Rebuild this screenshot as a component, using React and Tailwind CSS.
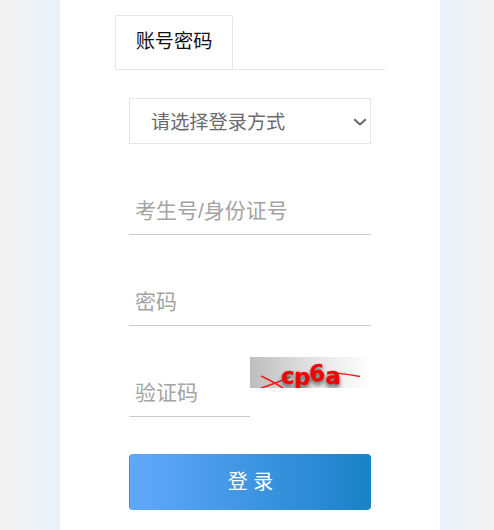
export default function App() {
  const field =
    "block w-[242px] border-b border-[#c9c9c9] bg-white pl-[6px] text-[21px] outline-none placeholder:text-[#a3a3a3]";
  return (
    <div className="flex h-[530px] w-[494px] overflow-hidden bg-[linear-gradient(90deg,#f3f3f3_15px,#e8f2fb_60px,#e8f2fb_440px,#f3f3f3_482px)] pl-[60px] font-['Liberation_Sans','Noto_Sans_CJK_SC',sans-serif]">
      <div className="h-full w-[380px] bg-white pl-[55px] pt-[15px]">
        <div className="flex h-[55px] w-[270px] border-b border-[#e6e6e6]">
          <div className="flex h-[55px] w-[118px] items-center justify-center rounded-t-[2px] border border-[#e6e6e6] bg-white text-[19.2px] text-[#111]">
            账号密码
          </div>
        </div>
        <div className="ml-[14px] w-[242px]">
          <div className="relative mt-[28px] h-[46px] w-[242px]">
            <select
              defaultValue="a"
              className="block h-[46px] w-[242px] appearance-none rounded-none border border-[#e6e6e6] bg-white pl-[21px] pr-[30px] pt-[4px] text-[19.2px] text-[#6b6b6b] outline-none"
            >
              <option value="a">请选择登录方式</option>
            </select>
            <svg width="14" height="8" viewBox="0 0 14 8" className="absolute left-[224px] top-[20px]">
              <path d="M1.2 1.2 L7 6.4 L12.8 1.2" stroke="#666" strokeWidth="2" fill="none" />
            </svg>
          </div>
          <input placeholder="考生号/身份证号" className={"mt-[44px] h-[47px] " + field} />
          <input placeholder="密码" className={"mt-[44px] h-[47px] " + field} />
          <div className="mt-[31px] flex h-[60px] w-[242px]">
            <input
              placeholder="验证码"
              className="mt-[13px] block h-[47px] w-[121px] border-b border-[#c9c9c9] bg-white pl-[6px] text-[21px] outline-none placeholder:text-[#a3a3a3]"
            />
            <svg width="121" height="31" viewBox="0 0 121 31" className="block shrink-0">
              <defs>
                <linearGradient id="cap" x1="0" x2="1" y1="0" y2="0">
                  <stop offset="0" stopColor="#bdbdbd" />
                  <stop offset="0.5" stopColor="#e2e2e2" />
                  <stop offset="1" stopColor="#ffffff" />
                </linearGradient>
              </defs>
              <rect width="121" height="31" fill="url(#cap)" />
              <path
                d="M11 19 Q 24 25 33 31 M11 31 Q 24 27 40 20 M86 16 Q 97 17 110 19.5"
                stroke="#f41c1c"
                strokeWidth="1.6"
                fill="none"
              />
              <text
                x="31"
                y="27"
                dy="0 1 -3 2"
                rotate="0 0 -6 0"
                fontFamily="'DejaVu Sans',sans-serif"
                fontWeight="700"
                fontSize="23"
                letterSpacing="-0.6"
                fill="#f50000"
                stroke="#f50000"
                strokeWidth="0.3"
                className="[filter:drop-shadow(0px_3px_2px_#555)]"
              >
                cp6a
              </text>
            </svg>
          </div>
          <button className="mt-[37px] block h-[56px] w-[242px] rounded-[4px] border-l border-[#3f8fe0] bg-[linear-gradient(90deg,#62a8fc,#1a82c7)] text-[20px] text-white">
            登 录
          </button>
        </div>
      </div>
    </div>
  );
}
